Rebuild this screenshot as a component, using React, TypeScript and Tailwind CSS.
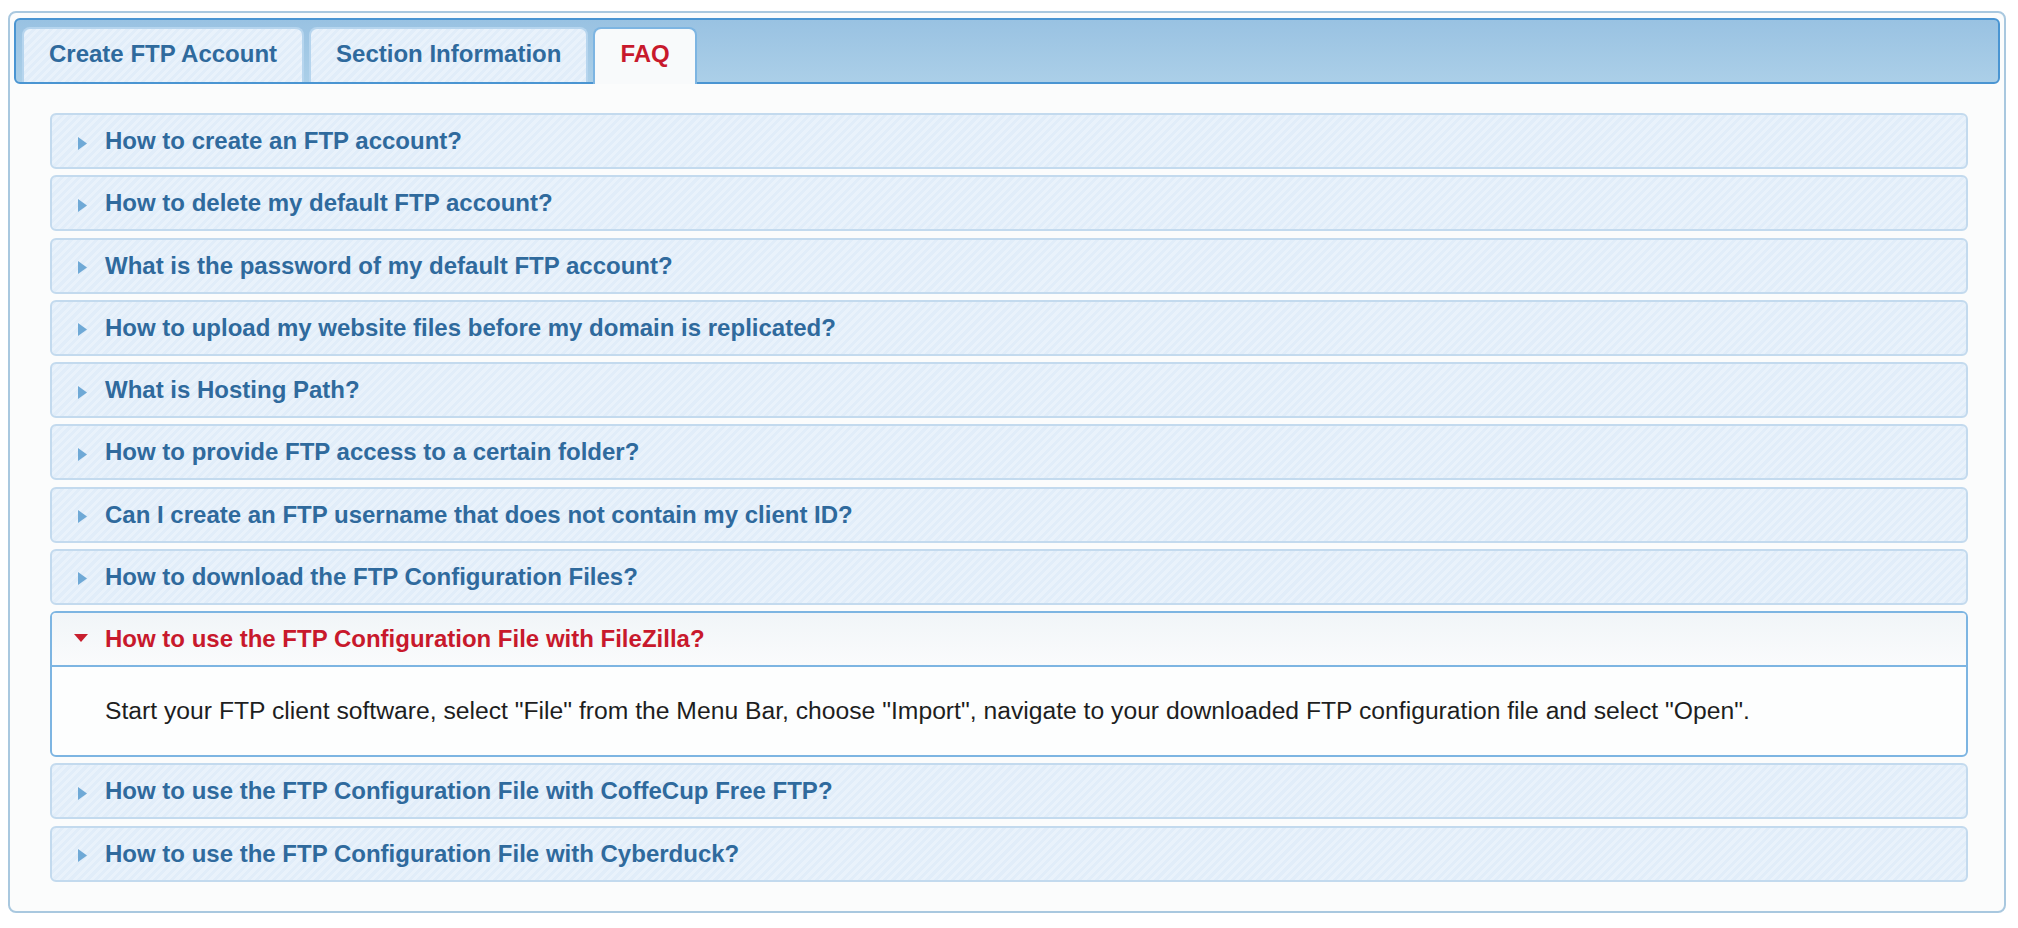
import { useState } from "react";

const questions = [
  "How to create an FTP account?",
  "How to delete my default FTP account?",
  "What is the password of my default FTP account?",
  "How to upload my website files before my domain is replicated?",
  "What is Hosting Path?",
  "How to provide FTP access to a certain folder?",
  "Can I create an FTP username that does not contain my client ID?",
  "How to download the FTP Configuration Files?",
  "How to use the FTP Configuration File with FileZilla?",
  "How to use the FTP Configuration File with CoffeCup Free FTP?",
  "How to use the FTP Configuration File with Cyberduck?",
];

const answers: Record<number, string> = {
  8: 'Start your FTP client software, select "File" from the Menu Bar, choose "Import", navigate to your downloaded FTP configuration file and select "Open".',
};

const tabs = ["Create FTP Account", "Section Information", "FAQ"];

const stripes =
  "bg-[repeating-linear-gradient(135deg,#e1edf9_0px,#e1edf9_3px,#e9f2fb_3px,#e9f2fb_6px)]";

function ArrowRight() {
  return (
    <svg width="9" height="13" viewBox="0 0 9 13" className="ml-[4px] mt-[4px]">
      <path d="M0 0 L9 6.5 L0 13 Z" fill="#6fa9d6" />
    </svg>
  );
}

function ArrowDown() {
  return (
    <svg width="14" height="8" viewBox="0 0 14 8" className="mt-[-2px]">
      <path d="M0 0 L14 0 L7 8 Z" fill="#c81f2e" />
    </svg>
  );
}

export default function App() {
  const [activeTab, setActiveTab] = useState(2);
  const [open, setOpen] = useState<number | null>(8);

  return (
    <div className="font-['Liberation_Sans',Arial,sans-serif] bg-white min-h-screen pt-[11px] pl-[8px]">
      <div className="w-[1998px] border-2 border-[#a9c8df] rounded-[8px] bg-[#fbfcfc] px-[4px] pt-[5px] pb-[29px]">
        <div className="h-[66px] border-2 border-[#4a95d2] rounded-[6px] bg-gradient-to-b from-[#99c2e2] to-[#abcfe8] flex items-end gap-[5px] pl-[6px]">
          {tabs.map((t, i) =>
            i === activeTab ? (
              <button
                key={t}
                onClick={() => setActiveTab(i)}
                className="relative h-[57px] -mb-[2px] px-[25px] pb-[6px] border-2 border-b-0 border-[#7db5e2] rounded-t-[8px] bg-[#f8fafb] text-[24px] font-bold text-[#c8192c]"
              >
                {t}
              </button>
            ) : (
              <button
                key={t}
                onClick={() => setActiveTab(i)}
                className={`h-[55px] px-[25px] pb-[4px] border-2 border-b-0 border-[#b6d5ee] rounded-t-[8px] ${stripes} text-[24px] font-bold text-[#2f6a9d]`}
              >
                {t}
              </button>
            )
          )}
        </div>

        <div className="flex flex-col gap-[6.25px] pl-[36px] pr-[32px] pt-[29px]">
          {questions.map((q, i) =>
            open === i ? (
              <div key={q} className="border-2 border-[#7db5e2] rounded-[6px] bg-[#fdfefe] overflow-hidden">
                <button
                  onClick={() => setOpen(null)}
                  className="w-full h-[54px] flex items-center pl-[22px] border-b-2 border-[#7db5e2] bg-gradient-to-b from-[#f1f5f8] to-[#fafbfc] text-left"
                >
                  <span className="w-[16px] flex items-center">
                    <ArrowDown />
                  </span>
                  <span className="ml-[15px] text-[24px] font-bold text-[#c8192c]">{q}</span>
                </button>
                <div className="h-[88px] flex items-center pl-[53px] text-[24.7px] text-[#1e1e1e]">
                  {answers[i]}
                </div>
              </div>
            ) : (
              <button
                key={q}
                onClick={() => setOpen(i)}
                className={`h-[56px] flex items-center pl-[22px] border-2 border-[#c3daee] rounded-[6px] ${stripes} text-left`}
              >
                <span className="w-[16px] flex items-center">
                  <ArrowRight />
                </span>
                <span className="ml-[15px] text-[24px] font-bold text-[#2f6a9d]">{q}</span>
              </button>
            )
          )}
        </div>
      </div>
    </div>
  );
}
